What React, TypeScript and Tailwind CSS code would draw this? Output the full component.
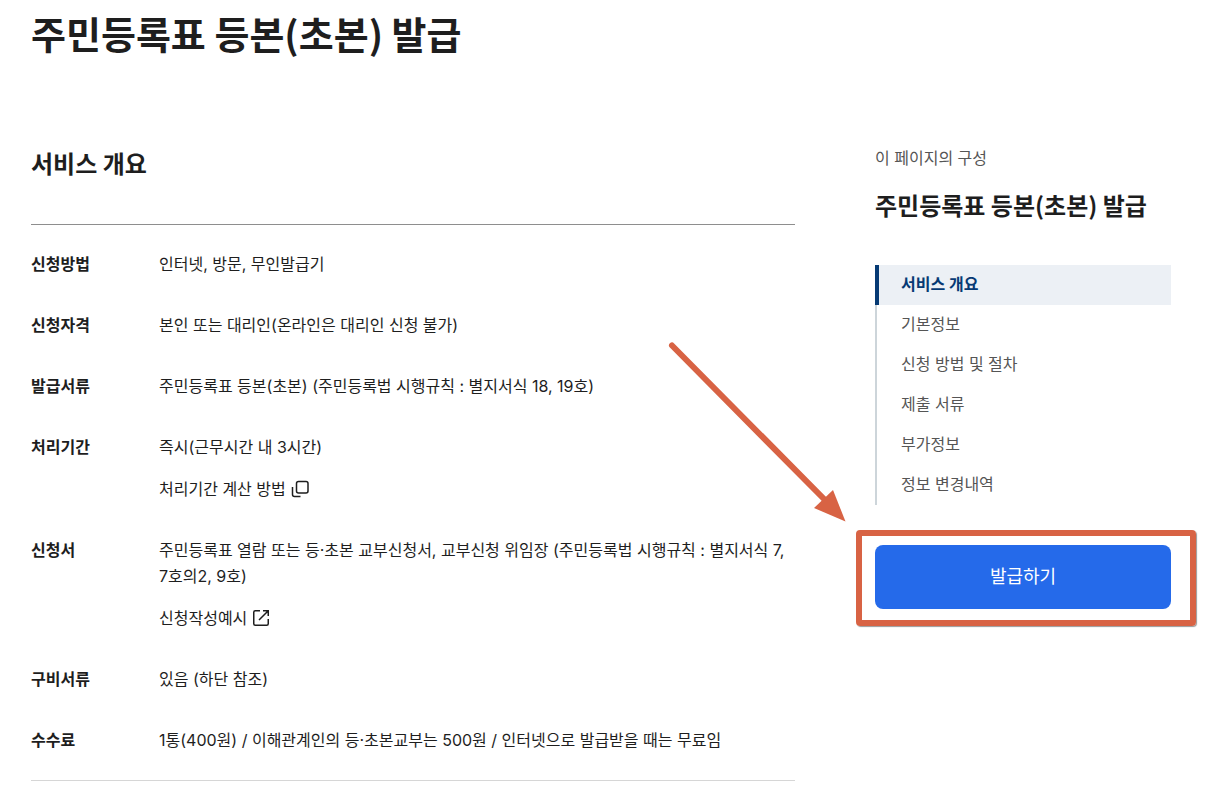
/**
 * Service detail page – summary of the application plus an in-page nav with the issue button.
 */
import type { ReactNode } from 'react';

interface OverviewItem {
  label: string;
  text: string;
  link?: { label: string; icon: ReactNode };
}

function PopupIcon() {
  return (
    <svg width="20" height="20" viewBox="0 0 20 20" fill="none" stroke="currentColor" strokeWidth="1.5" aria-hidden="true">
      <rect x="6.5" y="2.5" width="11.5" height="11.5" rx="2" />
      <path d="M2.500 8v7.500a2 2 0 0 0 2 2h6" />
    </svg>
  );
}

function ExternalIcon() {
  return (
    <svg width="20" height="20" viewBox="0 0 20 20" fill="none" stroke="currentColor" strokeWidth="1.5" aria-hidden="true">
      <path d="M9 2.750H4.250a1.500 1.500 0 0 0-1.500 1.500v11.500a1.500 1.500 0 0 0 1.500 1.500h11.500a1.500 1.500 0 0 0 1.500-1.500V11" />
      <path d="M12 2.750h5.250V8M17 3l-9 9" />
    </svg>
  );
}

const overview: OverviewItem[] = [
  { label: '신청방법', text: '인터넷, 방문, 무인발급기' },
  { label: '신청자격', text: '본인 또는 대리인(온라인은 대리인 신청 불가)' },
  { label: '발급서류', text: '주민등록표 등본(초본) (주민등록법 시행규칙 : 별지서식 18, 19호)' },
  {
    label: '처리기간',
    text: '즉시(근무시간 내 3시간)',
    link: { label: '처리기간 계산 방법', icon: <PopupIcon /> },
  },
  {
    label: '신청서',
    text: '주민등록표 열람 또는 등·초본 교부신청서, 교부신청 위임장 (주민등록법 시행규칙 : 별지서식 7, 7호의2, 9호)',
    link: { label: '신청작성예시', icon: <ExternalIcon /> },
  },
  { label: '구비서류', text: '있음 (하단 참조)' },
  { label: '수수료', text: '1통(400원) / 이해관계인의 등·초본교부는 500원 / 인터넷으로 발급받을 때는 무료임' },
];

const sections = ['서비스 개요', '기본정보', '신청 방법 및 절차', '제출 서류', '부가정보', '정보 변경내역'];

function Overview() {
  return (
    <section aria-labelledby="overview-title" className="min-w-0 flex-1 pt-0.5">
      <h2 id="overview-title" className="font-['Noto_Sans_CJK_KR',sans-serif] text-2xl leading-8 font-bold">
        서비스 개요
      </h2>
      <dl className="mt-[45px] flex flex-col gap-[35px] border-y border-t-[#8e8e8e] border-b-[#d6d6d6] pt-[26px] pb-[27px]">
        {overview.map((item) => (
          <div key={item.label} className="flex">
            <dt className="w-32 shrink-0 font-bold">{item.label}</dt>
            <dd className="min-w-0 flex-1 break-keep">
              <p>{item.text}</p>
              {item.link && (
                <a href="#" className="mt-4 flex w-fit items-center gap-1">
                  {item.link.label}
                  {item.link.icon}
                </a>
              )}
            </dd>
          </div>
        ))}
      </dl>
    </section>
  );
}

function PageNav() {
  return (
    <nav aria-label="이 페이지의 구성">
      <ul>
        {sections.map((name, i) => {
          const isActive = i === 0;
          return (
            <li key={name}>
              <a
                href="#"
                aria-current={isActive ? 'true' : undefined}
                className={`flex h-10 items-center pb-0.5 ${
                  isActive
                    ? 'border-l-4 border-[#063a74] bg-[#ecf0f5] pl-[22px] font-bold text-[#063a74]'
                    : 'border-l-2 border-[#cdd5da] pl-6 text-[#555555]'
                }`}
              >
                {name}
              </a>
            </li>
          );
        })}
      </ul>
    </nav>
  );
}

function IssueButton() {
  return (
    <div className="relative mt-10">
      <button type="button" className="h-16 w-full rounded-lg bg-[#256aea] text-lg text-white">
        발급하기
      </button>
      {/* highlight frame and pointer */}
      <div
        aria-hidden="true"
        className="pointer-events-none absolute -top-[15px] -right-[25px] -bottom-[17px] -left-[19px] rounded-[4px] border-6 border-[#d86344] shadow-[1px_1px_1px_#00000066]"
      />
      <svg
        width="180"
        height="184"
        viewBox="0 0 180 184"
        aria-hidden="true"
        className="pointer-events-none absolute right-full bottom-full mr-[27px] mb-5"
      >
        <path d="M4 4.5 158 160" stroke="#d86344" strokeWidth="6" strokeLinecap="round" />
        <path d="M165 149 177.500 180.500 146 167z" fill="#d86344" />
      </svg>
    </div>
  );
}

export default function App() {
  return (
    <div className="min-h-screen bg-white pt-[5px] pr-[46px] pl-[31px] font-['Inter','Noto_Sans_CJK_KR',sans-serif] text-base leading-[26px] text-[#1e1e1e]">
      <h1 className="font-['Noto_Sans_CJK_KR',sans-serif] text-[38px] leading-14 font-bold">주민등록표 등본(초본) 발급</h1>
      <main className="mt-[84px] flex items-start gap-20">
        <div className="min-w-0 flex-1">
          <Overview />
        </div>
        <aside className="w-[296px] shrink-0">
          <p className="text-[#555555]">이 페이지의 구성</p>
          <h2 className="mt-[18px] mb-11 font-['Noto_Sans_CJK_KR',sans-serif] text-2xl leading-8 font-bold whitespace-nowrap">
            주민등록표 등본(초본) 발급
          </h2>
          <PageNav />
          <IssueButton />
        </aside>
      </main>
    </div>
  );
}
